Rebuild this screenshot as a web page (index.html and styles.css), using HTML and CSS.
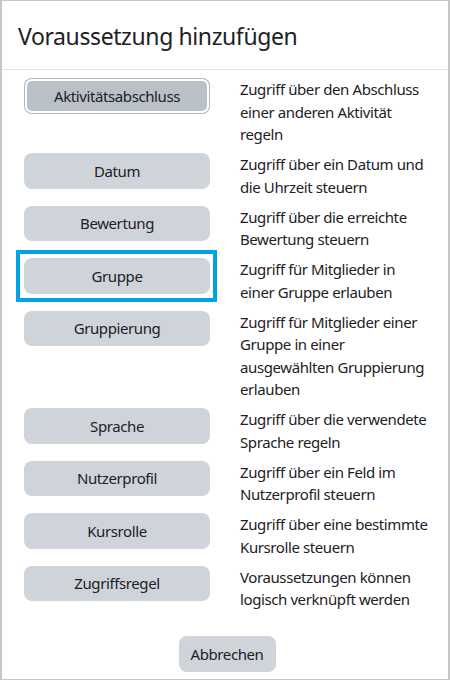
FILE: index.html
```html
<!DOCTYPE html>
<html lang="de">

<head>
    <meta charset="UTF-8">
    <meta name="viewport" content="width=device-width, initial-scale=1.0">
    <title>Voraussetzung hinzufügen</title>
    <link rel="stylesheet" href="styles.css">
</head>

<body>
    <div class="dialog">
        <div class="dialog-header">
            <h5 class="dialog-title">Voraussetzung hinzufügen</h5>
        </div>
        <div class="dialog-body">
            <div class="option">
                <button class="btn btn-active">Aktivitätsabschluss</button>
                <p>Zugriff über den Abschluss einer anderen Aktivität regeln</p>
            </div>
            <div class="option">
                <button class="btn">Datum</button>
                <p>Zugriff über ein Datum und die Uhrzeit steuern</p>
            </div>
            <div class="option">
                <button class="btn">Bewertung</button>
                <p>Zugriff über die erreichte Bewertung steuern</p>
            </div>
            <div class="option">
                <button class="btn btn-marked">Gruppe</button>
                <p>Zugriff für Mitglieder in einer Gruppe erlauben</p>
            </div>
            <div class="option">
                <button class="btn">Gruppierung</button>
                <p>Zugriff für Mitglieder einer Gruppe in einer ausgewählten Gruppierung erlauben</p>
            </div>
            <div class="option">
                <button class="btn">Sprache</button>
                <p>Zugriff über die verwendete Sprache regeln</p>
            </div>
            <div class="option">
                <button class="btn">Nutzerprofil</button>
                <p>Zugriff über ein Feld im Nutzerprofil steuern</p>
            </div>
            <div class="option">
                <button class="btn">Kursrolle</button>
                <p>Zugriff über eine bestimmte Kursrolle steuern</p>
            </div>
            <div class="option">
                <button class="btn">Zugriffsregel</button>
                <p>Voraussetzungen können logisch verknüpft werden</p>
            </div>
            <div class="dialog-footer">
                <button class="btn btn-cancel">Abbrechen</button>
            </div>
        </div>
    </div>
</body>

</html>
```

FILE: styles.css
```css
html, body {
    margin: 0;
    padding: 0;
}

body {
    font-family: 'Noto Sans', 'Open Sans', sans-serif;
    font-size: 15px;
    line-height: 22.5px;
    letter-spacing: -0.4px;
    color: #1d2125;
    background: #ffffff;
}

.dialog {
    width: 450px;
    height: 680px;
    box-sizing: border-box;
    border: 1px solid #c6c6c6;
    border-left-width: 2px;
    border-right-width: 2px;
    background: #ffffff;
}

.dialog-header {
    padding: 19px 16px 16px 16px;
    border-bottom: 1px solid #dee2e6;
}

.dialog-title {
    margin: 0;
    font-size: 23px;
    line-height: 33px;
    font-weight: 400;
    letter-spacing: -0.4px;
}

.dialog-body {
    padding: 8px 18px 0 22px;
}

.option {
    display: grid;
    grid-template-columns: 186px 1fr;
    column-gap: 30px;
    align-items: start;
    margin-bottom: 7.5px;
}

.option p {
    margin: 0;
}

.btn {
    position: relative;
    font-family: inherit;
    font-size: 15px;
    line-height: 22.5px;
    letter-spacing: -0.4px;
    color: #1d2125;
    background-color: #ced4da;
    border: none;
    border-radius: 8px;
    padding: 6.5px 12px;
    cursor: pointer;
}

.btn-active {
    background-color: #b9c0c8;
    box-shadow: inset 0 0 0 1px #b3b8bd, inset 0 0 0 3px #ffffff;
}

/* highlight frame drawn over the "Gruppe" button */
.btn-marked::after {
    content: "";
    position: absolute;
    top: -8px;
    left: -8px;
    right: -7px;
    bottom: -8px;
    border: 4px solid #00a2e3;
}

.dialog-footer {
    display: flex;
    justify-content: center;
    padding-top: 18px;
}
```
